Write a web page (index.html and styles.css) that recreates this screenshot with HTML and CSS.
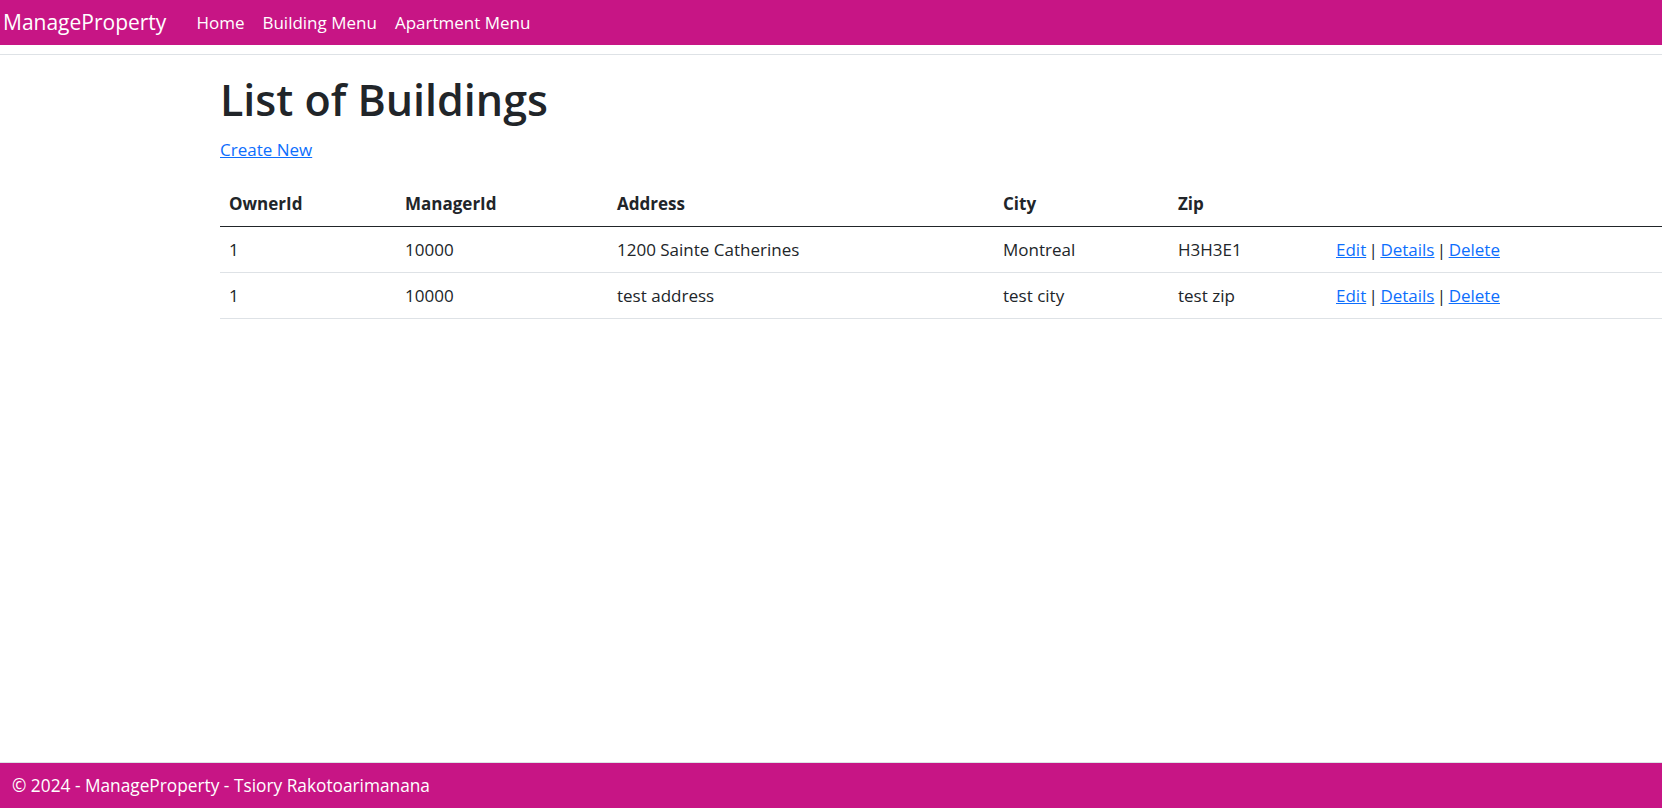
FILE: index.html
```html
<!DOCTYPE html>
<html lang="en">
<head>
<meta charset="utf-8">
<title>List of Buildings - ManageProperty</title>
<link rel="stylesheet" href="styles.css">
</head>
<body>
<header class="site-header">
  <nav class="navbar">
    <a class="brand" href="#">ManageProperty</a>
    <ul class="nav-links">
      <li><a href="#">Home</a></li>
      <li><a href="#">Building Menu</a></li>
      <li><a href="#">Apartment Menu</a></li>
    </ul>
  </nav>
</header>
<main class="content">
  <h1 class="title">List of Buildings</h1>
  <p class="create"><a href="#">Create New</a></p>
  <table class="data-table">
    <colgroup>
      <col class="c-owner">
      <col class="c-manager">
      <col class="c-address">
      <col class="c-city">
      <col class="c-zip">
      <col class="c-actions">
    </colgroup>
    <thead>
      <tr>
        <th>OwnerId</th>
        <th>ManagerId</th>
        <th>Address</th>
        <th>City</th>
        <th>Zip</th>
        <th></th>
      </tr>
    </thead>
    <tbody>
      <tr>
        <td>1</td>
        <td>10000</td>
        <td>1200 Sainte Catherines</td>
        <td>Montreal</td>
        <td>H3H3E1</td>
        <td class="actions"><a href="#">Edit</a> | <a href="#">Details</a> | <a href="#">Delete</a></td>
      </tr>
      <tr>
        <td>1</td>
        <td>10000</td>
        <td>test address</td>
        <td>test city</td>
        <td>test zip</td>
        <td class="actions"><a href="#">Edit</a> | <a href="#">Details</a> | <a href="#">Delete</a></td>
      </tr>
    </tbody>
  </table>
</main>
<footer class="site-footer">
  <div class="footer-text">&copy; 2024 - ManageProperty - Tsiory Rakotoarimanana</div>
</footer>
</body>
</html>
```

FILE: styles.css
```css
* { box-sizing: border-box; }

html, body {
  margin: 0;
  padding: 0;
  height: 100%;
}

body {
  font-family: "Open Sans", "Noto Sans", "Liberation Sans", sans-serif;
  font-size: 18px;
  line-height: 1.5;
  color: #212529;
  background: #fff;
  display: flex;
  flex-direction: column;
  min-height: 100vh;
  overflow-x: hidden;
}

a { color: #0d6efd; }

.site-header {
  padding-bottom: 9px;
  border-bottom: 1px solid #dee2e6;
}

.navbar {
  background: #c71585;
  height: 45px;
  display: flex;
  align-items: center;
  padding-left: 3px;
}

.brand {
  color: #fff;
  text-decoration: none;
  font-size: 21px;
  margin-right: 21px;
  white-space: nowrap;
}

.nav-links {
  list-style: none;
  margin: 0;
  padding: 0;
  display: flex;
}

.nav-links li a {
  color: #fff;
  text-decoration: none;
  font-size: 17px;
  padding: 0 9px;
  white-space: nowrap;
}

.content {
  padding: 18px 0 0 220px;
  flex: 1;
}

.title {
  font-size: 43px;
  font-weight: 600;
  line-height: 54px;
  margin: 0 0 9px 0;
}

.create {
  margin: 0 0 18px 0;
  font-size: 17px;
  line-height: 27px;
}

.data-table {
  border-collapse: collapse;
  table-layout: fixed;
  width: 1520px;
  font-size: 17px;
}

.c-owner { width: 176px; }
.c-manager { width: 212px; }
.c-address { width: 386px; }
.c-city { width: 175px; }
.c-zip { width: 158px; }
.c-actions { width: 413px; }

.data-table th,
.data-table td {
  text-align: left;
  padding: 9px 9px;
  line-height: 27px;
  border-bottom: 1px solid #dee2e6;
  white-space: nowrap;
}

.data-table th {
  font-weight: 700;
  border-bottom: 1.5px solid #212529;
}

.data-table .actions {
  word-spacing: -2px;
}

.site-footer {
  background: #c71585;
  border-top: 1px solid #dee2e6;
  height: 46px;
  display: flex;
  align-items: center;
  padding-left: 12px;
  color: #fff;
  font-size: 17.3px;
}

.footer-text { white-space: nowrap; }
```
